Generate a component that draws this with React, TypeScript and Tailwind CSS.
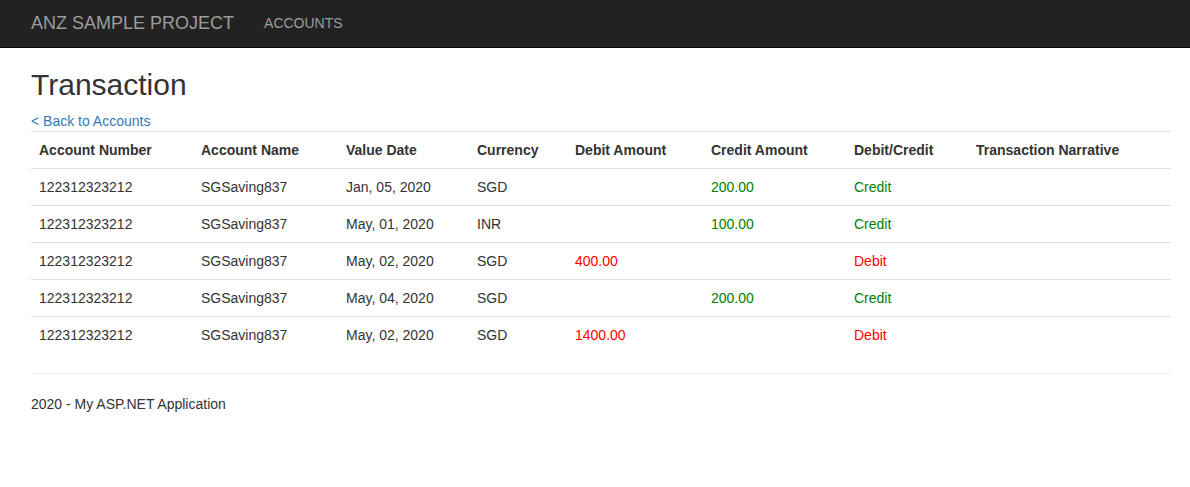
const ROWS = [
  { acc: '122312323212', name: 'SGSaving837', date: 'Jan, 05, 2020', cur: 'SGD', debit: '', credit: '200.00', type: 'Credit' },
  { acc: '122312323212', name: 'SGSaving837', date: 'May, 01, 2020', cur: 'INR', debit: '', credit: '100.00', type: 'Credit' },
  { acc: '122312323212', name: 'SGSaving837', date: 'May, 02, 2020', cur: 'SGD', debit: '400.00', credit: '', type: 'Debit' },
  { acc: '122312323212', name: 'SGSaving837', date: 'May, 04, 2020', cur: 'SGD', debit: '', credit: '200.00', type: 'Credit' },
  { acc: '122312323212', name: 'SGSaving837', date: 'May, 02, 2020', cur: 'SGD', debit: '1400.00', credit: '', type: 'Debit' },
];

const HEADERS = [
  'Account Number',
  'Account Name',
  'Value Date',
  'Currency',
  'Debit Amount',
  'Credit Amount',
  'Debit/Credit',
  'Transaction Narrative',
];

const WIDTHS = [162, 145, 131, 98, 136, 143, 122, 203];

export default function App() {
  return (
    <div className="min-h-[487px] bg-white text-[14px] leading-[20px] text-[#333] font-['Liberation_Sans',Arial,sans-serif]">
      {/* Navbar */}
      <nav className="h-[48px] bg-[#222] border-b border-[#080808] flex items-center pl-[31px] pb-[2px]">
        <span className="text-[18px] text-[#9d9d9d]">ANZ SAMPLE PROJECT</span>
        <span className="ml-[30px] text-[14px] text-[#9d9d9d]">ACCOUNTS</span>
      </nav>

      <div className="pl-[31px] w-[1171px]">
        <h2 className="mt-[20px] mb-[10px] text-[30px] leading-[33px] font-normal">Transaction</h2>
        <a className="block text-[#337ab7] leading-[20px]">&lt; Back to Accounts</a>

        {/* Table */}
        <table className="w-[1140px] table-fixed border-collapse mb-[20px]">
          <colgroup>
            {WIDTHS.map((w, i) => (
              <col key={i} style={{ width: w }} />
            ))}
          </colgroup>
          <thead>
            <tr className="border-t border-b border-[#ddd]">
              {HEADERS.map(h => (
                <th key={h} className="text-left font-bold px-[8px] py-[8px] leading-[20px]">
                  {h}
                </th>
              ))}
            </tr>
          </thead>
          <tbody>
            {ROWS.map((r, i) => (
              <tr key={i} className={i < ROWS.length - 1 ? 'border-b border-[#ddd]' : ''}>
                <td className="px-[8px] py-[8px]">{r.acc}</td>
                <td className="px-[8px] py-[8px]">{r.name}</td>
                <td className="px-[8px] py-[8px]">{r.date}</td>
                <td className="px-[8px] py-[8px]">{r.cur}</td>
                <td className="px-[8px] py-[8px] text-[#ff0000]">{r.debit}</td>
                <td className="px-[8px] py-[8px] text-[#008000]">{r.credit}</td>
                <td className={`px-[8px] py-[8px] ${r.type === 'Debit' ? 'text-[#ff0000]' : 'text-[#008000]'}`}>
                  {r.type}
                </td>
                <td className="px-[8px] py-[8px]"></td>
              </tr>
            ))}
          </tbody>
        </table>

        <hr className="border-t border-[#eee] mt-[20px] mb-[20px] w-[1140px]" />
        <footer>
          <p>2020 - My ASP.NET Application</p>
        </footer>
      </div>
    </div>
  );
}
